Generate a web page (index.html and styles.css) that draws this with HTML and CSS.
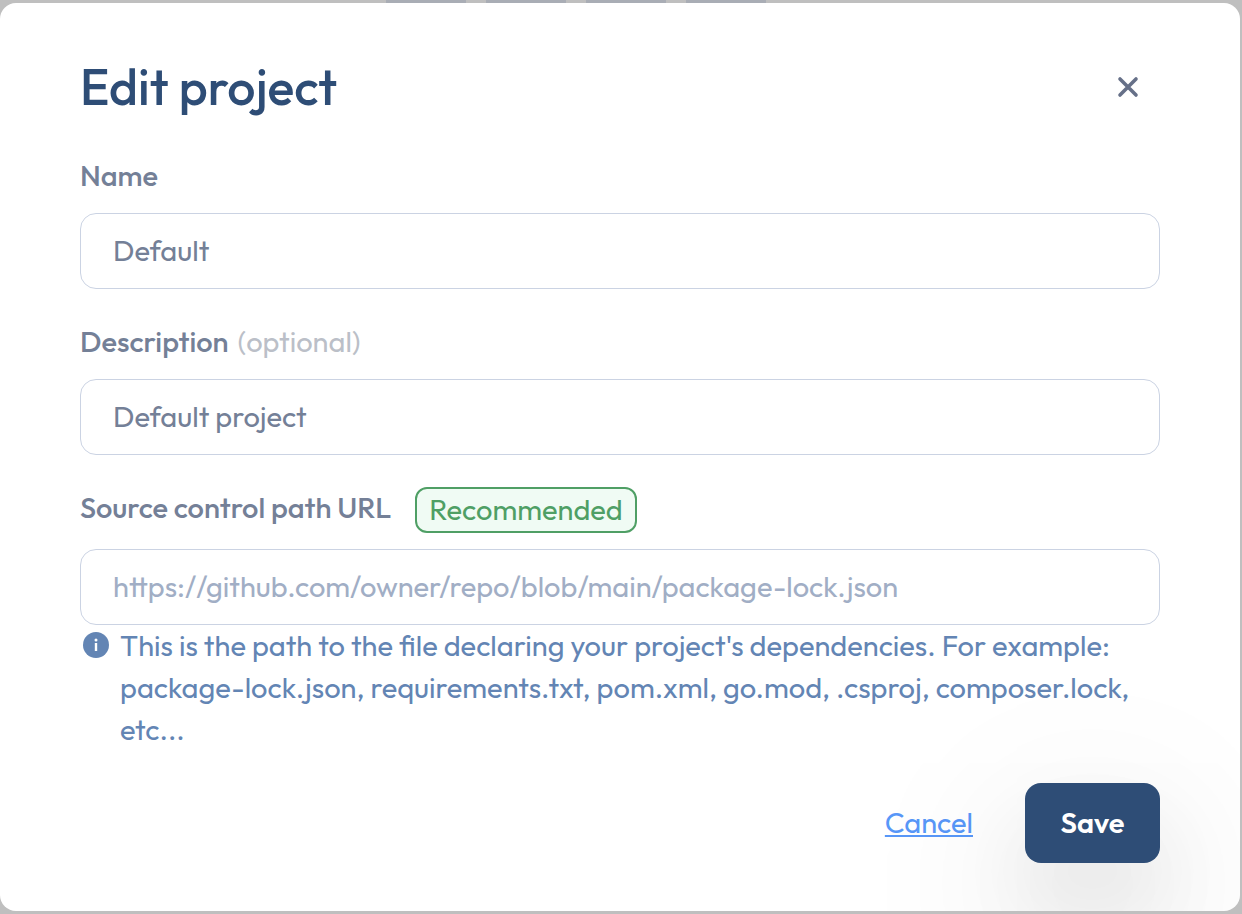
FILE: index.html
```html
<!DOCTYPE html>
<html lang="en">
<head>
    <meta charset="UTF-8">
    <meta name="viewport" content="width=device-width, initial-scale=1.0">
    <title>Edit project</title>
    <link rel="stylesheet" href="styles.css">
</head>
<body>
    <div class="page-tabs">
        <span></span>
        <span></span>
        <span></span>
        <span></span>
    </div>
    <div class="modal" role="dialog" aria-labelledby="modal-title">
        <div class="modal-header">
            <h1 id="modal-title">Edit project</h1>
            <button type="button" class="close-btn" aria-label="Close">
                <svg width="24" height="24" viewBox="0 0 24 24" fill="none" stroke="currentColor" stroke-width="3.6" stroke-linecap="round">
                    <path d="M4 4l16 16M20 4L4 20"/>
                </svg>
            </button>
        </div>
        <form id="edit-project-form">
            <div class="form-group">
                <div class="label-row">
                    <label for="name">Name</label>
                </div>
                <input type="text" id="name" name="name" value="Default">
            </div>
            <div class="form-group">
                <div class="label-row">
                    <label for="description">Description <span class="optional">(optional)</span></label>
                </div>
                <input type="text" id="description" name="description" value="Default project">
            </div>
            <div class="form-group">
                <div class="label-row">
                    <label for="source-url">Source control path URL</label>
                    <span class="badge">Recommended</span>
                </div>
                <input type="text" id="source-url" name="source-url" placeholder="https://github.com/owner/repo/blob/main/package-lock.json">
                <div class="help">
                    <svg width="32" height="32" viewBox="0 0 32 32">
                        <circle cx="16" cy="16" r="13" fill="#6385b4"/>
                        <circle cx="16" cy="11" r="1.5" fill="#fff"/>
                        <path d="M16 14v8" stroke="#fff" stroke-width="2.4"/>
                    </svg>
                    <p>This is the path to the file declaring your project's dependencies. For example: package-lock.json, requirements.txt, pom.xml, go.mod, .csproj, composer.lock, etc...</p>
                </div>
            </div>
            <div class="actions">
                <a href="#" class="cancel">Cancel</a>
                <button type="submit" class="save-btn">Save</button>
            </div>
        </form>
    </div>
</body>
</html>
```
FILE: styles.css
```css
* {
    box-sizing: border-box;
}

body, h1, p, input, button {
    font-family: Outfit, Lato, sans-serif;
    margin: 0;
    padding: 0;
}

body {
    background-color: #bfbfbf;
    font-size: 29px;
    line-height: 42px;
}

.page-tabs {
    display: flex;
    gap: 20px;
    height: 3px;
    padding-left: 386px;
}

.page-tabs span {
    width: 80px;
    background-color: #a9adb5;
}

.modal {
    background-color: #ffffff;
    border-radius: 16px;
    margin-right: 2px;
    padding: 54px 80px 48px;
    overflow: hidden;
}

.modal-header {
    display: flex;
    justify-content: space-between;
    align-items: center;
    margin-bottom: 38px;
}

h1 {
    color: #2e4d76;
    font-size: 50px;
    font-weight: 500;
    line-height: 60px;
}

.close-btn {
    display: flex;
    align-items: center;
    justify-content: center;
    width: 64px;
    height: 56px;
    background: none;
    border: none;
    color: #667088;
}

.form-group {
    margin-bottom: 32px;
}

.label-row {
    display: flex;
    align-items: flex-start;
    gap: 24px;
    margin-bottom: 16px;
}

label {
    color: #748097;
    font-weight: 500;
}

.optional {
    margin-left: 3px;
    color: #bbbfc8;
    font-weight: 400;
}

.badge {
    background-color: #f0fbf4;
    border: 2px solid #4f9f65;
    border-radius: 12px;
    color: #4f9f65;
    padding: 0 12px;
}

input {
    display: block;
    width: 100%;
    height: 76px;
    padding: 0 32px 2px;
    background-color: #ffffff;
    border: 1px solid #cbd3e3;
    border-radius: 16px;
    color: #748097;
    font-size: 29px;
}

input::placeholder {
    color: #a1aec5;
    opacity: 1;
}

.help {
    display: flex;
    gap: 8px;
    color: #6385b4;
}

.help svg {
    flex: none;
    margin-top: 4px;
}

.actions {
    display: flex;
    justify-content: flex-end;
    align-items: center;
    gap: 52px;
}

.cancel {
    color: #5897f8;
}

.save-btn {
    width: 135px;
    height: 80px;
    padding-bottom: 2px;
    background-color: #2e4d76;
    border: none;
    border-radius: 16px;
    box-shadow: 0 60px 180px rgba(0, 0, 0, 0.2), 0 48px 80px rgba(0, 0, 0, 0.06);
    color: #ffffff;
    font-size: 29px;
    font-weight: 600;
}
```
